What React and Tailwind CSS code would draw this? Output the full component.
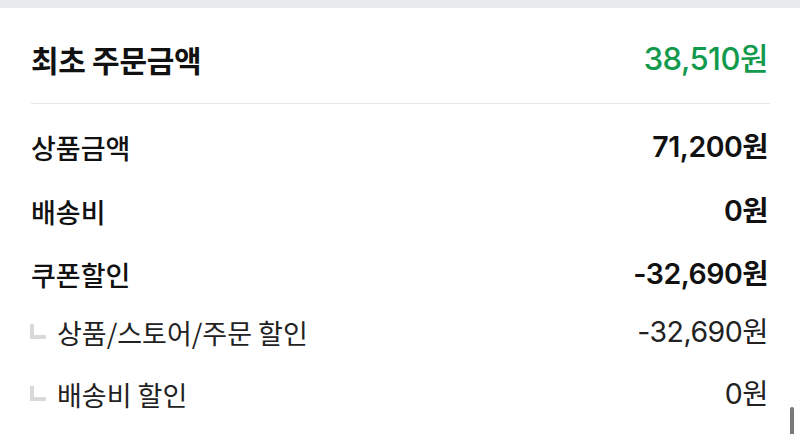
const rows = [
  { label: '상품금액', value: '71,200원', h: 'h-[64px]' },
  { label: '배송비', value: '0원', h: 'h-[64px]' },
  { label: '쿠폰할인', value: '-32,690원', h: 'h-[62px]' },
];

const subRows = [
  { label: '상품/스토어/주문 할인', value: '-32,690원', h: 'h-[54px]' },
  { label: '배송비 할인', value: '0원', h: 'h-[70px]' },
];

function SubMark() {
  return <span className="mr-[11px] mt-[-2px] block h-[15px] w-[16px] border-b-[4px] border-l-[4px] border-[#d9d9d9]" />;
}

export default function App() {
  return (
    <div className="relative h-[434px] w-[800px] overflow-hidden bg-white font-['Inter','Noto_Sans_CJK_KR',sans-serif] text-[#111]">
      <div className="h-[8px] bg-[#e8eaed]" />

      <div className="flex h-[95px] items-center justify-between pl-[31px] pr-[32px] pt-[6px]">
        <span className="font-['Noto_Sans_CJK_KR',sans-serif] text-[30px] font-bold leading-none tracking-[-0.3px]">최초 주문금액</span>
        <span className="text-[31px] font-medium leading-none tracking-[-0.5px] text-[#119a4c]">38,510원</span>
      </div>

      <div className="ml-[31px] mr-[30px] h-px bg-[#e6e6e6]" />

      <div className="pt-[11px]">
        {rows.map((r) => (
          <div key={r.label} className={`flex items-center justify-between pl-[31px] pr-[32px] ${r.h}`}>
            <span className="font-['Noto_Sans_CJK_KR',sans-serif] text-[27px] font-medium leading-none">{r.label}</span>
            <span className="text-[28.5px] font-semibold leading-none tracking-[-0.5px]">{r.value}</span>
          </div>
        ))}
        {subRows.map((r) => (
          <div key={r.label} className={`flex items-center justify-between pl-[30px] pr-[32px] ${r.h}`}>
            <span className="flex items-center">
              <SubMark />
              <span className="font-['Noto_Sans_CJK_KR',sans-serif] text-[27px] leading-none text-[#222]">{r.label}</span>
            </span>
            <span className="text-[28.5px] font-normal leading-none tracking-[-0.5px] text-[#222]">{r.value}</span>
          </div>
        ))}
      </div>

      <div className="absolute right-[6px] top-[407px] h-[30px] w-[4px] rounded-full bg-[#7a7a7a]" />
    </div>
  );
}
